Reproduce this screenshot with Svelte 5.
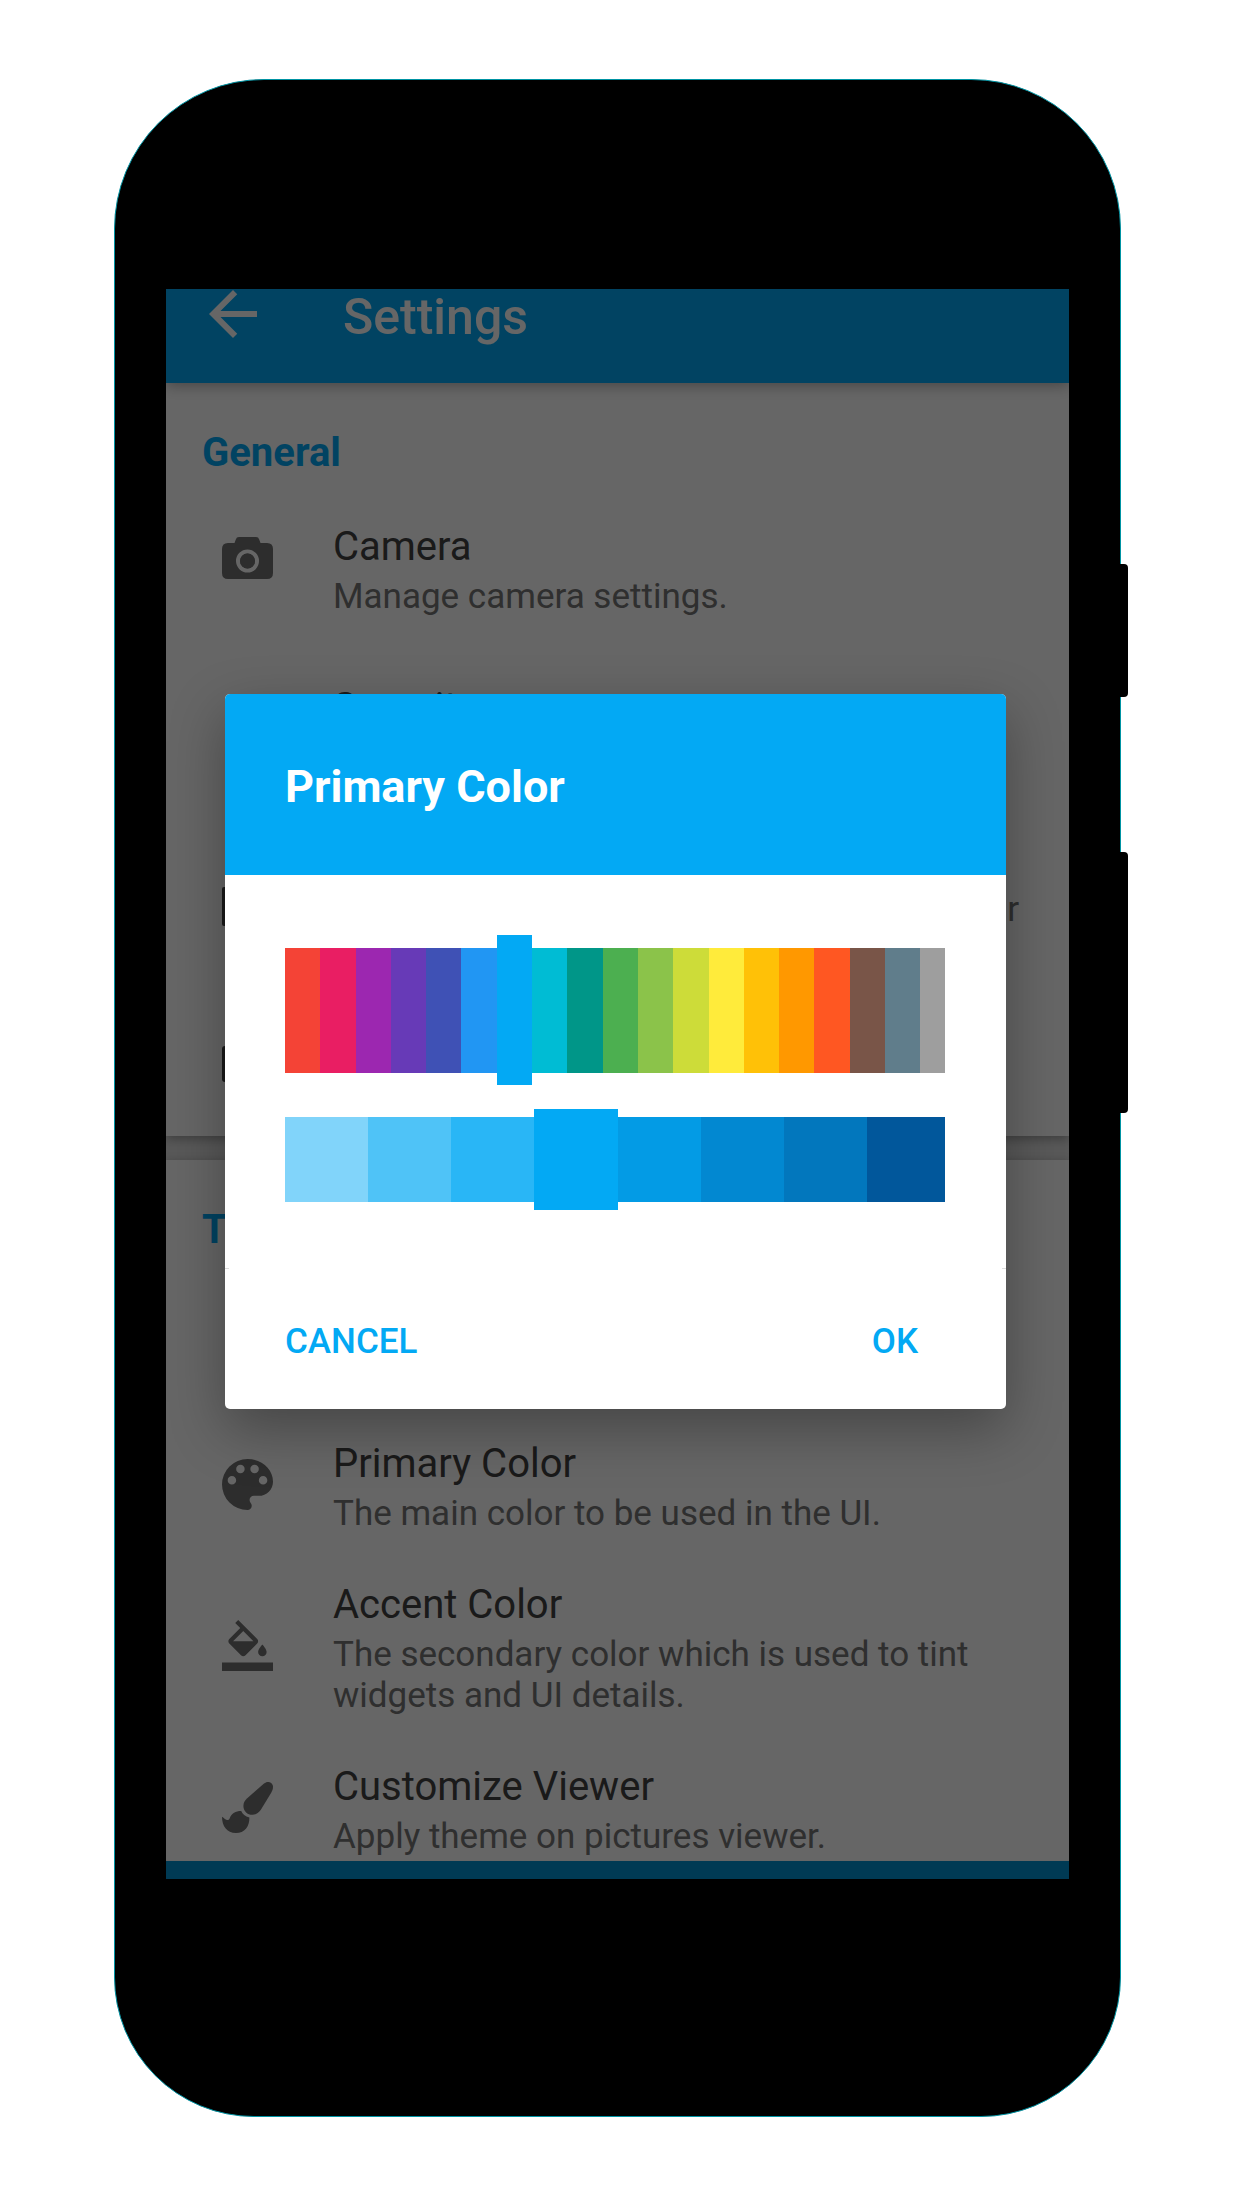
<script lang="ts">
  type Row = { icon: string; title: string; text: string; size?: string };

  const general: Row[] = [
    { icon: 'camera', title: 'Camera', text: 'Manage camera settings.', size: 'tall' },
    { icon: 'lock', title: 'Security', text: 'Protect your albums.', size: 'medium' },
    { icon: 'map', title: 'Map Provider', text: 'Select the map provider used to display your photo details.' },
    { icon: 'card', title: 'Excluded Albums', text: 'Manage excluded albums.' },
  ];

  const theme: Row[] = [
    { icon: 'lock', title: 'Base Theme', text: 'Pick a base theme.' },
    { icon: 'palette', title: 'Primary Color', text: 'The main color to be used in the UI.' },
    {
      icon: 'fill',
      title: 'Accent Color',
      text: 'The secondary color which is used to tint widgets and UI details.',
    },
    { icon: 'brush', title: 'Customize Viewer', text: 'Apply theme on pictures viewer.' },
  ];

  const sections = [
    { name: 'General', rows: general },
    { name: 'Theme', rows: theme },
  ];

  const hues = [
    { name: 'Red', value: '#f44336' },
    { name: 'Pink', value: '#e91e63' },
    { name: 'Purple', value: '#9c27b0' },
    { name: 'Deep purple', value: '#673ab7' },
    { name: 'Indigo', value: '#3f51b5' },
    { name: 'Blue', value: '#2196f3' },
    { name: 'Light blue', value: '#03a9f4' },
    { name: 'Cyan', value: '#00bcd4' },
    { name: 'Teal', value: '#009688' },
    { name: 'Green', value: '#4caf50' },
    { name: 'Light green', value: '#8bc34a' },
    { name: 'Lime', value: '#cddc39' },
    { name: 'Yellow', value: '#ffeb3b' },
    { name: 'Amber', value: '#ffc107' },
    { name: 'Orange', value: '#ff9800' },
    { name: 'Deep orange', value: '#ff5722' },
    { name: 'Brown', value: '#795548' },
    { name: 'Blue grey', value: '#607d8b' },
    { name: 'Grey', value: '#9e9e9e' },
  ];

  const shades = [
    { name: '200', value: '#81d4fa' },
    { name: '300', value: '#4fc3f7' },
    { name: '400', value: '#29b6f6' },
    { name: '500', value: '#03a9f4' },
    { name: '600', value: '#039be5' },
    { name: '700', value: '#0288d1' },
    { name: '800', value: '#0277bd' },
    { name: '900', value: '#01579b' },
  ];

  let hue = $state('#03a9f4');
  let shade = $state('#03a9f4');
</script>

{#snippet glyph(name: string)}
  {#if name === 'camera'}
    <svg class="glyph camera" viewBox="0 0 51 66" aria-hidden="true">
      <path
        fill-rule="evenodd"
        d="M17 0h17q2.500 0 3.200 2.400L38.500 6H45q6 0 6 6v24q0 6-6 6H6q-6 0-6-6V12q0-6 6-6h6.500l1.300-3.600Q14.500 0 17 0ZM25.500 12.500a11.500 11.500 0 1 0 0 23 11.500 11.500 0 1 0 0-23ZM25.500 16.500a7.500 7.500 0 1 1 0 15 7.500 7.500 0 1 1 0-15Z"
      />
      <circle cx="25.500" cy="24" r="7.500" />
    </svg>
  {:else if name === 'palette'}
    <svg class="glyph" viewBox="3 3 18 18" aria-hidden="true">
      <path
        d="M12 3a9 9 0 0 0 0 18c.83 0 1.500-.67 1.500-1.500 0-.39-.15-.74-.39-1.010-.23-.26-.38-.61-.38-.99 0-.83.67-1.500 1.500-1.500H16c2.760 0 5-2.240 5-5 0-4.420-4.030-8-9-8zm-5.500 9a1.500 1.500 0 1 1 0-3 1.500 1.500 0 0 1 0 3zm3-4a1.500 1.500 0 1 1 0-3 1.500 1.500 0 0 1 0 3zm5 0a1.500 1.500 0 1 1 0-3 1.500 1.500 0 0 1 0 3zm3 4a1.500 1.500 0 1 1 0-3 1.500 1.500 0 0 1 0 3z"
      />
    </svg>
  {:else if name === 'fill'}
    <svg class="glyph" viewBox="0 0 24 24" aria-hidden="true">
      <path
        d="M16.560 8.940 7.620 0 6.210 1.410l2.380 2.380-5.150 5.150c-.59.59-.59 1.540 0 2.120l5.500 5.500c.29.29.68.44 1.060.44s.77-.15 1.060-.44l5.500-5.500c.59-.58.59-1.530 0-2.120zM5.210 10 10 5.210 14.790 10H5.210zM19 11.500s-2 2.170-2 3.500c0 1.100.9 2 2 2s2-.9 2-2c0-1.330-2-3.500-2-3.500zM0 20h24v4H0z"
      />
    </svg>
  {:else if name === 'brush'}
    <svg class="glyph" viewBox="0 0 51 51" aria-hidden="true">
      <path
        d="M46 0c3 0 5 2.200 5 5 0 2-.8 3.800-1.800 5.800L39 27.600c-2.500 3.600-5.300 5.200-8.700 5.200-5 0-8.900-3.800-8.900-8.900 0-3.100 1.300-5.400 3.800-7.700L42 1.600C43.300.5 44.600 0 46 0Z"
      />
      <path
        d="M19.200 29c1.400 3.200 3.900 5.500 8.200 6.400C27.600 44.500 22.500 51 14 51 4.700 51 0 44 0 34.800c1.200.8 4 3.300 5.300 3.300 1 0 1.800-.7 2.300-1.700C9.800 31.300 13.500 29 19.200 29Z"
      />
    </svg>
  {:else if name === 'map'}
    <svg class="glyph dark" viewBox="0 0 51 51" aria-hidden="true">
      <rect y="12" width="51" height="39" rx="2" />
    </svg>
  {:else if name === 'card'}
    <svg class="glyph dark" viewBox="0 0 51 51" aria-hidden="true">
      <rect y="9" width="51" height="36" rx="3" />
    </svg>
  {:else}
    <svg class="glyph" viewBox="0 0 51 51" aria-hidden="true">
      <path d="M12 22h4v-6a10 10 0 0 1 20 0v6h4v24H12zM20 22h12v-6a6 6 0 0 0-12 0z" />
    </svg>
  {/if}
{/snippet}

<div class="phone">
  <span class="key power"></span>
  <span class="key volume"></span>

  <div class="screen">
    <header class="toolbar">
      <button class="back" aria-label="Back">
        <svg viewBox="4 4 16 16" aria-hidden="true">
          <path d="M20 11H7.830l5.590-5.590L12 4l-8 8 8 8 1.410-1.410L7.830 13H20v-2z" />
        </svg>
      </button>
      <h1>Settings</h1>
    </header>

    <main>
      {#each sections as section}
        <section class="group">
          <h2>{section.name}</h2>
          {#each section.rows as row}
            <button class="row {row.size ?? ''}">
              {@render glyph(row.icon)}
              <span class="copy">
                <span class="title">{row.title}</span>
                <span class="detail">{row.text}</span>
              </span>
            </button>
          {/each}
        </section>
      {/each}
    </main>
    <div class="navbar"></div>

    <div class="scrim">
      <div class="dialog" role="dialog" aria-modal="true" aria-labelledby="dialog-title">
        <h2 class="dialog-title" id="dialog-title">Primary Color</h2>
        <div class="pickers">
          <div class="strip hues" role="radiogroup" aria-label="Color">
            {#each hues as c}
              <input
                type="radio"
                name="hue"
                aria-label={c.name}
                value={c.value}
                bind:group={hue}
                style:background-color={c.value}
              />
            {/each}
          </div>
          <div class="strip shades" role="radiogroup" aria-label="Shade">
            {#each shades as c}
              <input
                type="radio"
                name="shade"
                aria-label={c.name}
                value={c.value}
                bind:group={shade}
                style:background-color={c.value}
              />
            {/each}
          </div>
        </div>
        <div class="actions">
          <button>CANCEL</button>
          <button>OK</button>
        </div>
      </div>
    </div>
  </div>
</div>

<style>
  :global(body) {
    background: #fff;
    font-family: Roboto, 'Liberation Sans', sans-serif;
  }

  :global(#app) {
    display: flow-root;
  }

  h1,
  h2 {
    margin: 0;
  }

  button {
    margin: 0;
    padding: 0;
    border: 0;
    background: none;
    font: inherit;
    color: inherit;
    text-align: left;
    cursor: pointer;
  }

  .phone {
    position: relative;
    margin: 79px 121px 90px 114px;
    padding: 209px 51px 237px;
    border: 1px solid #0093a3;
    border-radius: 150px 150px 140px 140px;
    background: #000;
  }

  .key {
    position: absolute;
    right: -8px;
    width: 12px;
    border-radius: 0 4px 4px 0;
    background: #000;
  }

  .power {
    top: 484px;
    height: 133px;
  }

  .volume {
    top: 772px;
    height: 261px;
  }

  .screen {
    position: relative;
    overflow: hidden;
    background: #dedede;
  }

  .toolbar {
    position: relative;
    z-index: 1;
    display: flex;
    align-items: flex-start;
    gap: 86px;
    height: 94px;
    padding-left: 43px;
    background: #03a9f4;
    box-shadow: 0 2px 14px rgba(0, 0, 0, 0.35);
    color: #fff;
  }

  .back {
    padding-top: 1px;
  }

  .back svg {
    display: block;
    width: 48px;
    height: 48px;
    fill: currentColor;
  }

  h1 {
    font-size: 50px;
    font-weight: 500;
    line-height: 56px;
  }

  main {
    display: flex;
    flex-direction: column;
    gap: 24px;
  }

  .group {
    padding-top: 46px;
    background: #fff;
    box-shadow: 0 3px 10px rgba(0, 0, 0, 0.3);
  }

  .group:last-child {
    padding-bottom: 4px;
  }

  .group h2 {
    padding: 0 36px 23px;
    font-size: 40px;
    font-weight: 700;
    line-height: 47px;
    color: #03a9f4;
  }

  .row {
    display: flex;
    align-items: center;
    gap: 60px;
    width: 100%;
    padding: 23px 44px 24px 56px;
  }

  .row.tall {
    padding-top: 24px;
    padding-bottom: 44px;
  }

  .row.medium {
    padding-bottom: 35px;
  }

  .group:last-child .row:last-child {
    padding-bottom: 0;
  }

  .glyph {
    flex: none;
    width: 51px;
    height: 51px;
    margin-bottom: 6px;
    fill: #707070;
  }

  .glyph.camera {
    height: 66px;
    margin-bottom: 0;
  }

  .glyph.dark {
    fill: #404040;
  }

  .copy {
    display: flex;
    flex-direction: column;
    gap: 6px;
  }

  .title {
    font-size: 40px;
    line-height: 47px;
    color: #424242;
  }

  .detail {
    font-size: 35px;
    line-height: 41px;
    color: #757575;
  }

  .navbar {
    position: relative;
    height: 18px;
    background: #0291d1;
  }

  .scrim {
    position: absolute;
    inset: 0;
    z-index: 2;
    padding: 405px 63px 0 59px;
    background: rgba(0, 0, 0, 0.6);
  }

  .dialog {
    overflow: hidden;
    border-radius: 5px;
    background: #fff;
    box-shadow: 0 20px 56px rgba(0, 0, 0, 0.32);
  }

  .dialog-title {
    padding: 66px 60px 62px;
    background: #03a9f4;
    font-size: 45px;
    font-weight: 700;
    line-height: 53px;
    color: #fff;
  }

  .pickers {
    display: flex;
    flex-direction: column;
    gap: 24px;
    padding: 60px 61px 58px 60px;
  }

  .strip {
    display: flex;
    align-items: center;
  }

  .strip input {
    flex: 141 1 0;
    min-width: 0;
    margin: 0;
    appearance: none;
    cursor: pointer;
  }

  .hues {
    height: 150px;
  }

  .hues input {
    height: 125px;
  }

  .hues input:last-child {
    flex-grow: 99;
  }

  .shades {
    height: 101px;
  }

  .shades input {
    height: 85px;
  }

  .shades input:last-child {
    flex-grow: 132;
  }

  .strip input:checked {
    height: 100%;
  }

  .actions {
    display: flex;
    justify-content: space-between;
    padding: 53px 88px 47px 60px;
    background:
      linear-gradient(#ddd, #ddd) left top / 4px 1px no-repeat,
      linear-gradient(#ddd, #ddd) right top / 4px 1px no-repeat;
    font-size: 35px;
    font-weight: 500;
    line-height: 41px;
    color: #03a9f4;
  }
</style>
